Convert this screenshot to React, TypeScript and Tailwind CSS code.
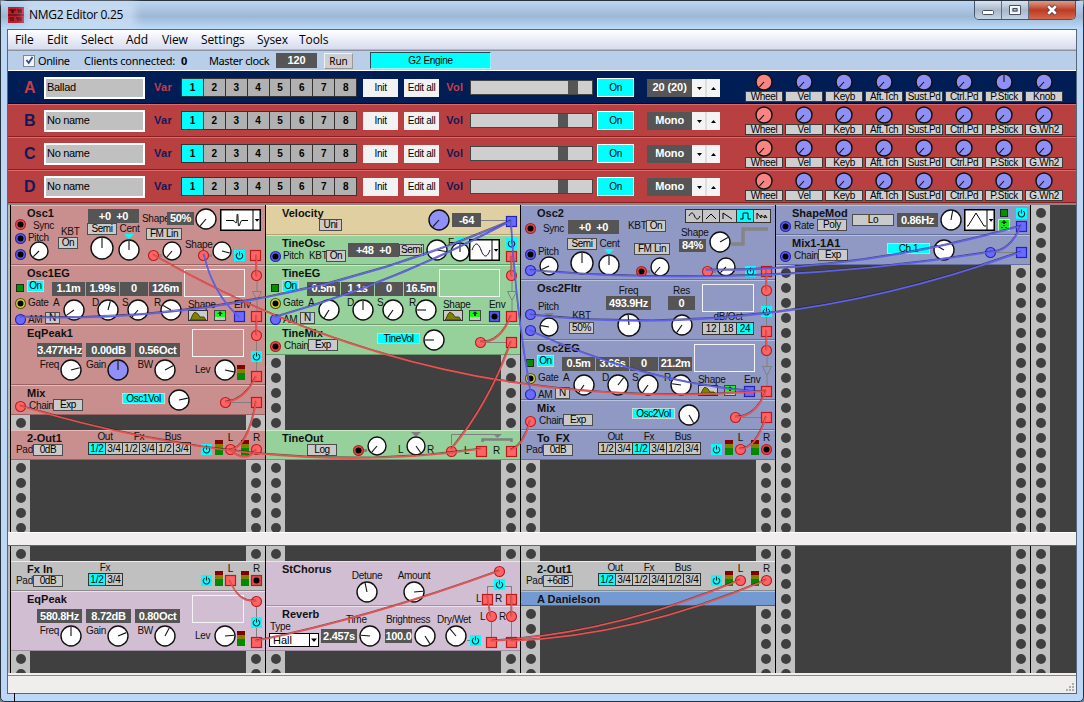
import React, { type ReactNode } from "react";

type Tint = "red" | "blue" | "yellow";
type WithClass = { className?: string; children?: ReactNode };

/* ---------- basic controls ---------- */

function T({ className = "", children }: WithClass) {
  return <span className={"block shrink-0 whitespace-pre text-[10px] leading-3 tracking-[-0.3px] text-[#111] " + className}>{children}</span>;
}

function Title({ children }: WithClass) {
  return <h3 className="h-[14px] shrink-0 whitespace-pre pl-4 text-[11px] font-bold leading-[14px] text-[#111]">{children}</h3>;
}

function Btn({ className = "", children }: WithClass) {
  return (
    <button className={"flex h-3 shrink-0 items-center justify-center whitespace-nowrap border border-[#4c4c4c] bg-[#cacaca] text-[10px] leading-none tracking-[-0.4px] text-black " + className}>
      {children}
    </button>
  );
}

function Lit({ className = "", children }: WithClass) {
  return (
    <button className={"flex shrink-0 items-center justify-center whitespace-nowrap border border-[#c8dada] bg-[#00ffff] text-[10px] leading-none tracking-[-0.4px] text-black " + className}>
      {children}
    </button>
  );
}

function Val({ className = "", children }: WithClass) {
  return (
    <div className={"flex shrink-0 items-center justify-center overflow-hidden whitespace-pre bg-[#555555] text-[11px] font-bold leading-none tracking-[-0.3px] text-white " + className}>
      {children}
    </div>
  );
}

function Knob({ r = 10, a = 0, fill = "#ffffff", className = "" }: { r?: number; a?: number; fill?: string; className?: string }) {
  const s = 2 * r + 2;
  const c = s / 2;
  const t = (a * Math.PI) / 180;
  return (
    <svg width={s} height={s} className={"block shrink-0 overflow-visible " + className}>
      <circle cx={c} cy={c} r={r} fill={fill} stroke="#101010" strokeWidth="1.4" />
      <line x1={c} y1={c} x2={c + Math.sin(t) * (r - 1)} y2={c - Math.cos(t) * (r - 1)} stroke="#111" strokeWidth="1.1" />
    </svg>
  );
}

const JACK = {
  red: { on: "#ff6363", edge: "#b81c1c", ring: "#e04a4a" },
  blue: { on: "#6a6aff", edge: "#2424b4", ring: "#5a5ae6" },
  yellow: { on: "#d8d848", edge: "#55550a", ring: "#d0d048" },
};

function Jack({ c = "red", on = false, out = false, className = "" }: { c?: Tint; on?: boolean; out?: boolean; className?: string }) {
  const k = JACK[c];
  const fill = on ? k.on : k.ring;
  return (
    <svg width="11" height="11" className={"block shrink-0 overflow-visible " + className}>
      {out ? <rect x="0.5" y="0.5" width="10" height="10" fill={fill} stroke={k.edge} strokeWidth="1.2" /> : <circle cx="5.5" cy="5.5" r="5" fill={fill} stroke={k.edge} strokeWidth="1.1" />}
      {!on && <circle cx="5.5" cy="5.5" r="3" fill="#000" />}
    </svg>
  );
}

function Power({ className = "" }: WithClass) {
  return (
    <svg width="11" height="11" className={"block shrink-0 bg-[#00ffff] " + className} fill="none" stroke="#123" strokeWidth="1.1">
      <path d="M3.7 3.1a3.2 3.2 0 1 0 3.6 0M5.5 1.6v4" />
    </svg>
  );
}

function Meter({ className = "" }: WithClass) {
  return (
    <div className={"flex h-[15px] w-2 shrink-0 flex-col " + className}>
      <div className="h-1 bg-[#800000]" />
      <div className="h-1 bg-[#808000]" />
      <div className="flex-1 bg-[#008a00]" />
    </div>
  );
}

function Led({ className = "" }: WithClass) {
  return <div className={"h-2 w-2 shrink-0 border border-[#163016] bg-[#009000] " + className} />;
}

function Graph({ className = "" }: WithClass) {
  return <div className={"h-7 shrink-0 border border-[#f4f4f4] " + className} />;
}

function Stub() {
  return <div className="mb-1 h-[3px] w-[3px] shrink-0 bg-[#858585]" />;
}

function Wire({ className = "" }: WithClass) {
  return <div className={"bg-[#808080] " + className} />;
}

function Triangle({ fill = "#808080", className = "" }: { fill?: string; className?: string }) {
  return (
    <svg width="10" height="5" className={"block shrink-0 " + className}>
      <path d="M0 0h10l-5 5z" fill={fill} />
    </svg>
  );
}

function Segs({ labels, on }: { labels: string[]; on: number }) {
  return (
    <div className="flex border-l border-[#333]">
      {labels.map((l, i) => (
        <div
          key={i}
          className={"flex h-[13px] w-[17px] items-center justify-center border-y border-r border-[#333] text-[10px] leading-none tracking-[-0.2px] text-black " + (i === on ? "bg-[#00ffff]" : "bg-[#c6c6c6]")}
        >
          {l}
        </div>
      ))}
    </div>
  );
}

function WaveBox({ w, split, d, className = "" }: { w: number; split: number; d: string; className?: string }) {
  return (
    <svg width={w} height="22" className={"block shrink-0 " + className} fill="none" stroke="#000">
      <rect x="0.75" y="0.75" width={w - 1.5} height="20.5" fill="#fff" strokeWidth="1.5" />
      <line x1={split} x2={split} y1="0" y2="22" />
      <path d={d} />
      <path d={`M${split + 1.8} 10h4.6l-2.3 2.8z`} fill="#000" stroke="none" />
    </svg>
  );
}

/* ---------- rack ---------- */

const TONES = {
  red: "bg-[#c98e8e] border-t-[#e8baba] border-b-[#9a6464]",
  sand: "bg-[#dfcfa1] border-t-[#f4ead0] border-b-[#b3a272]",
  green: "bg-[#96d19b] border-t-[#c4edc6] border-b-[#699c6d]",
  blue: "bg-[#8f99c3] border-t-[#b9c1e2] border-b-[#66709c]",
  gray: "bg-[#c0c0c0] border-t-[#ececec] border-b-[#8a8a8a]",
  mauve: "bg-[#d2bed3] border-t-[#efe0f0] border-b-[#a38fa5]",
  azure: "bg-[#739bd2] border-t-[#a5c4ea] border-b-[#3c6296]",
};
type Tone = keyof typeof TONES;

const HEIGHTS = { 1: "h-[15px]", 2: "h-[30px]", 3: "h-[45px]", 4: "h-[60px]", 5: "h-[75px]" };

function Module({ units, tone, children }: { units: keyof typeof HEIGHTS; tone: Tone; children: ReactNode }) {
  return <section className={"flex w-[254px] shrink-0 border-y " + HEIGHTS[units] + " " + TONES[tone]}>{children}</section>;
}

function Blank({ rows }: { rows: number }) {
  const rail = (
    <div className="w-[19px] bg-[#c1c1c1]">
      {Array.from({ length: rows }, (_, i) => (
        <div key={i} className="flex h-[15px] items-center justify-center">
          <div className="h-[10px] w-[10px] rounded-full bg-[#3f3f3f]" />
        </div>
      ))}
    </div>
  );
  return (
    <div className="flex w-[254px] shrink-0 justify-between bg-[#404040]">
      {rail}
      {rail}
    </div>
  );
}

function Column({ children }: { children?: ReactNode }) {
  return <div className="flex w-[255px] shrink-0 flex-col overflow-hidden border-l border-black">{children}</div>;
}

/* Signal path on the right edge: input, bypass, output. */
function ThroughStrip() {
  return (
    <div className="ml-auto flex w-[17px] flex-col items-center pb-[2px] pt-1">
      <Jack on />
      <Wire className="w-px flex-1" />
      <Power />
      <Wire className="w-px flex-1" />
      <Jack on out />
    </div>
  );
}

/* ---------- shared module types ---------- */

function EnvModule({ tone, name, values, angles, envOn }: { tone: Tone; name: string; values: string[]; angles: number[]; envOn: boolean }) {
  const valueW = ["w-[33px]", "w-[33px]", "w-[28px]", "w-[33px]"];
  const cellW = ["w-[32px] -ml-[7px]", "w-[34px] pl-[7px]", "w-[30px] pl-[3px]", "w-[33px] pl-[5px]"];
  return (
    <Module units={4} tone={tone}>
      <div className="flex w-[237px] flex-col">
        <div className="flex h-[31px]">
          <div className="w-[173px]">
            <Title>{name}</Title>
            <div className="flex h-4 items-center pl-[5px]">
              <Led className="mb-px" />
              <Lit className="mb-1 ml-[3px] h-3 w-[17px]">On</Lit>
              <div className="ml-2 mt-px flex gap-px">
                {values.map((v, i) => (
                  <Val key={i} className={"h-[14px] " + valueW[i]}>
                    {v}
                  </Val>
                ))}
              </div>
            </div>
          </div>
          <Graph className="mt-[3px] w-[61px]" />
        </div>
        <div className="flex flex-1">
          <div className="flex w-[49px] flex-col gap-[3px]">
            <div className="flex items-center pl-1">
              <Jack c="yellow" />
              <T className="ml-[2px]">Gate</T>
            </div>
            <div className="flex items-center pl-1">
              <Jack c="blue" on />
              <T className="ml-[2px] w-[17px]">AM</T>
              <Btn className="mb-[3px] w-[15px]">N</Btn>
            </div>
          </div>
          {["A", "D", "S", "R"].map((l, i) => (
            <div key={l} className={"flex justify-between " + cellW[i]}>
              <T className="w-0">{l}</T>
              <Knob a={angles[i]} className="mt-[2px]" />
            </div>
          ))}
          <div className="ml-[6px] w-[46px] pt-[2px]">
            <T className="leading-[11px]">Shape</T>
            <div className="flex gap-[6px]">
              <svg width="20" height="11" className="block shrink-0 border border-[#333] bg-[#cacaca]">
                <path d="M1 9C3 7 3 3 6 1l3 2 2 3h4l2 3z" fill="#808000" stroke="#2e2e00" strokeWidth="0.8" />
              </svg>
              <svg width="12" height="11" className="block shrink-0 border border-[#444] bg-[#c8c8c8]">
                <path d="M0 0h10v6H0z" fill="#10ff10" />
                <path d="M5 0.3L7.8 3H6v2H4V3H2.2z" fill="#053605" />
              </svg>
            </div>
          </div>
          <div className="w-[14px] pt-[2px]">
            <T>Env</T>
            <Jack c="blue" out on={envOn} />
          </div>
        </div>
      </div>
      <div className="flex w-[17px] flex-col items-center pb-[2px] pt-1">
        <Jack on />
        <svg width="10" height="30" className="block" fill="none" stroke="#808080">
          <path d="M5 0v10M5 20v10M0.5 10.5h9L5 19.500z" />
        </svg>
        <Jack on out />
      </div>
    </Module>
  );
}

function EqModule({ tone, name, values, angles, gainFill }: { tone: Tone; name: string; values: string[]; angles: number[]; gainFill?: string }) {
  return (
    <Module units={4} tone={tone}>
      <div className="w-[181px]">
        <Title>{name}</Title>
        <div className="mt-[3px] flex gap-1 pl-[26px]">
          {values.map((v) => (
            <Val key={v} className="h-[14px] w-[45px]">
              {v}
            </Val>
          ))}
        </div>
        <div className="mt-[2px] flex pl-6">
          {["Freq", "Gain", "BW"].map((l, i) => (
            <div key={l} className="flex w-[47px] justify-end">
              <T className="mr-px">{l}</T>
              <Knob a={angles[i]} fill={i === 1 ? gainFill : undefined} />
            </div>
          ))}
        </div>
      </div>
      <div className="w-[54px] pt-[3px]">
        <Graph className="w-[52px]" />
        <div className="mt-[2px] flex items-center pl-[3px]">
          <T className="w-[19px]">Lev</T>
          <Knob a={angles[3]} />
          <Meter className="ml-px mt-[5px]" />
        </div>
      </div>
      <ThroughStrip />
    </Module>
  );
}

function MixModule({ tone, name, channel, a, c = "red", chainOn = false }: { tone: Tone; name: string; channel: string; a: number; c?: Tint; chainOn?: boolean }) {
  return (
    <Module units={2} tone={tone}>
      <div className="w-[111px]">
        <Title>{name}</Title>
        <div className="flex items-center pl-1">
          <Jack c={c} on={chainOn} />
          <T className="ml-[3px] w-6">Chain</T>
          <Btn className="-mt-[2px] w-[30px]">Exp</Btn>
        </div>
      </div>
      <Lit className="mt-[7px] h-[11px] w-[43px]">{channel}</Lit>
      <Knob a={a} className="ml-[3px] mt-[3px]" />
      <div className="ml-auto mr-[3px] flex items-center pt-[5px]">
        <Jack c={c} on />
        <Wire className="h-px w-5" />
        <Jack c={c} on out />
      </div>
    </Module>
  );
}

function OutModule({ tone, name, pad, on, groups = ["Out", "Fx", "Bus"], out = false, rOn }: { tone: Tone; name: string; pad: string; on: number; groups?: string[]; out?: boolean; rOn: boolean }) {
  return (
    <Module units={2} tone={tone}>
      <div className="w-[77px]">
        <Title>{name}</Title>
        <div className="-mt-px flex items-center pl-[5px]">
          <T className="w-[17px]">Pad</T>
          <Btn className="w-[30px]">{pad}</Btn>
        </div>
      </div>
      <div>
        <div className="flex">
          {groups.map((g) => (
            <T key={g} className="h-[11px] w-[34px] text-center">
              {g}
            </T>
          ))}
        </div>
        <Segs labels={groups.flatMap(() => ["1/2", "3/4"])} on={on} />
      </div>
      <div className="ml-auto mr-[3px] flex items-end pb-1">
        <Power />
        <Meter className="ml-[3px]" />
        <div className="flex w-[15px] flex-col items-center">
          <T>L</T>
          <Jack on out={out} />
        </div>
        <Meter className="ml-[3px] mr-[2px]" />
        <div className="flex w-[11px] flex-col items-center">
          <T>R</T>
          <Jack on={rOn} out={out} />
        </div>
      </div>
    </Module>
  );
}

/* Semitone and cent tuning, shared by both oscillators. */
function Tuning({ className = "" }: WithClass) {
  return (
    <div className={"flex w-[53px] flex-col items-center " + className}>
      <Val className="h-[14px] w-[51px]">{"+0  +0"}</Val>
      <div className="mt-auto flex">
        <div className="flex w-[30px] flex-col items-center">
          <Btn className="w-[30px]">Semi</Btn>
          <Knob r={11} className="mt-px" />
        </div>
        <div className="flex w-[23px] flex-col items-center">
          <T className="ml-[2px] leading-[11px]">Cent</T>
          <Triangle fill="#00ffff" />
          <Knob />
        </div>
      </div>
    </div>
  );
}

/* ---------- individual modules ---------- */

function Osc1() {
  return (
    <Module units={4} tone="red">
      <div className="w-[47px]">
        <Title>Osc1</Title>
        <div className="flex pl-1">
          <div className="-mt-px flex flex-col">
            <Jack />
            <Jack c="blue" className="mt-[3px]" />
            <Jack c="blue" className="mt-[5px]" />
          </div>
          <div className="ml-[2px]">
            <T className="ml-[5px]">Sync</T>
            <T>Pitch</T>
            <Knob r={9} a={225} className="-mt-[3px] ml-px" />
          </div>
        </div>
      </div>
      <div className="w-[29px] pt-5">
        <T className="ml-[3px] leading-[11px]">KBT</T>
        <Btn className="w-5">On</Btn>
      </div>
      <Tuning className="mb-[3px] mt-[3px]" />
      <div className="flex w-[125px] flex-col">
        <div className="flex h-[34px]">
          <div className="ml-[2px] w-[53px]">
            <div className="flex items-center pt-[6px]">
              <T className="w-[25px]">Shape</T>
              <Val className="h-[13px] w-[27px]">50%</Val>
            </div>
            <Btn className="ml-1 mt-[3px] w-9">FM Lin</Btn>
          </div>
          <Knob a={220} className="mt-[2px]" />
          <WaveBox w={41} split={33} className="ml-[3px] mt-[3px]" d="M6 11.500h7c2 0 2 2.500 3 2.500 1.500 0 .5-9 1.500-9s0 12 1.500 12c1 0 1-5.500 3-5.500h6" />
        </div>
        <div className="flex items-end pl-2">
          <Jack on />
          <Stub />
          <Knob r={9} a={220} />
          <div className="ml-[3px] w-[27px]">
            <T className="leading-[10px]">Shape</T>
            <div className="flex items-end justify-end">
              <Jack on />
              <Stub />
            </div>
          </div>
          <Knob r={9} a={105} />
          <Power className="ml-[2px]" />
          <Jack on out className="ml-[5px]" />
        </div>
      </div>
    </Module>
  );
}

function Velocity() {
  return (
    <Module units={2} tone="sand">
      <div className="w-[162px]">
        <Title>Velocity</Title>
        <Btn className="ml-[53px] -mt-px w-[23px]">Uni</Btn>
      </div>
      <Knob fill="#8f90f8" a={222} className="mt-[3px]" />
      <div className="ml-[2px] mr-[3px] flex flex-1 items-center">
        <Val className="h-[14px] w-[29px]">-64</Val>
        <Wire className="h-px flex-1" />
        <Jack c="blue" on out className="mt-[3px]" />
      </div>
    </Module>
  );
}

function TineOsc() {
  return (
    <Module units={2} tone="green">
      <div className="w-[82px]">
        <Title>TineOsc</Title>
        <div className="flex items-center pl-1">
          <Jack c="blue" />
          <T className="ml-[2px] w-[26px]">Pitch</T>
          <T className="w-[17px]">KBT</T>
          <Btn className="-mt-px w-5">On</Btn>
        </div>
      </div>
      <Val className="mt-[7px] h-[14px] w-[51px]">{"+48  +0"}</Val>
      <Btn className="mt-2 w-[25px]">Semi</Btn>
      <Knob a={100} className="ml-[2px] mt-[3px]" />
      <T className="w-[2px] pt-px">F</T>
      <div className="flex w-5 flex-col items-center">
        <Triangle fill="#00ffff" className="mt-px" />
        <Knob r={9} />
      </div>
      <WaveBox w={31} split={23} className="-ml-px mt-[3px]" d="M3 11C6 3 9 3 12 11s6 8 9 0" />
      <div className="ml-auto flex w-[17px] flex-col items-center gap-[2px] pt-[2px]">
        <Power />
        <Jack on out />
      </div>
    </Module>
  );
}

function TineOut() {
  return (
    <Module units={2} tone="green">
      <div className="w-[87px]">
        <Title>TineOut</Title>
        <Btn className="ml-[41px] -mt-px w-[30px]">Log</Btn>
      </div>
      <div className="flex items-end pb-[3px]">
        <Jack />
        <Stub />
        <Knob r={9} a={220} />
        <T className="ml-[11px] w-[8px]">L</T>
        <div className="flex flex-col items-center">
          <Triangle />
          <Knob r={9} a={145} className="-mt-px" />
        </div>
        <T className="ml-px">R</T>
      </div>
      <div className="ml-auto mr-[3px] pt-[3px]">
        <svg width="67" height="11" className="block" fill="none" stroke="#808080">
          <path d="M5.500 11V0.500h46" />
          <path d="M36.500 8V5.500h29V8" strokeWidth="2.500" />
          <path d="M47 0h9l-4.500 4z" fill="#808080" stroke="none" />
        </svg>
        <div className="flex items-center">
          <Jack on />
          <T className="ml-[7px] w-3">L</T>
          <Jack on out />
          <T className="ml-[6px] w-[13px]">R</T>
          <Jack on out />
        </div>
      </div>
    </Module>
  );
}

const WAVES = ["M3 6c2-4 4-4 5.500 0s4 4 5.500 0", "M3 9l5-5 5 5", "M3 9V3l9 6", "M3 9h3V3h5v6h3", "M3 9V3l4 5V5l4 3V5l2 3"];

function Osc2() {
  return (
    <Module units={5} tone="blue">
      <div className="w-[46px]">
        <Title>Osc2</Title>
        <div className="flex pl-1">
          <div className="flex flex-col pt-[3px]">
            <Jack />
            <Jack c="blue" className="mt-[15px]" />
            <Jack c="blue" on className="mt-[5px]" />
          </div>
          <div className="ml-[2px] pt-[3px]">
            <T className="ml-[5px]">Sync</T>
            <T className="mt-[11px]">Pitch</T>
            <Knob r={9} a={245} className="-mt-[2px] ml-px" />
          </div>
        </div>
      </div>
      <Tuning className="mb-[3px] mt-[14px]" />
      <div className="ml-2 w-[51px] pt-[14px]">
        <div className="flex items-center">
          <T className="w-[18px]">KBT</T>
          <Btn className="w-5">On</Btn>
        </div>
        <Btn className="ml-[6px] mt-[11px] w-9">FM Lin</Btn>
        <div className="mt-[2px] flex items-end pl-2">
          <Jack />
          <Stub />
          <Knob r={9} a={220} />
        </div>
      </div>
      <div className="flex flex-1 flex-col">
        <div className="ml-[6px] mt-[3px] flex border-l border-[#333]">
          {WAVES.map((d, i) => (
            <div key={i} className={"h-[14px] w-[17px] border-y border-r border-[#333] " + (i === 3 ? "bg-[#00ffff]" : "bg-[#c6c6c6]")}>
              <svg width="16" height="12" className="block" fill="none" stroke="#000">
                <path d={d} />
              </svg>
            </div>
          ))}
        </div>
        <div className="flex h-[34px]">
          <div className="w-[27px] pt-1">
            <T className="ml-[2px]">Shape</T>
            <Val className="h-[13px] w-[27px]">84%</Val>
          </div>
          <Knob a={60} className="ml-[3px] mt-2" />
          <svg width="38" height="22" className="mt-1 block" fill="none" stroke="#858585" strokeWidth="3.500">
            <path d="M0 17h12V2h25" />
          </svg>
        </div>
        <div className="mr-[3px] flex items-end justify-end">
          <Jack on />
          <Stub />
          <Knob r={9} a={225} />
          <Power className="ml-[9px]" />
          <Jack on out className="ml-[5px]" />
        </div>
      </div>
    </Module>
  );
}

function Osc2Fltr() {
  return (
    <Module units={4} tone="blue">
      <div className="w-12">
        <Title>Osc2Fltr</Title>
        <div className="flex pl-1">
          <div className="flex flex-col gap-[5px] pt-[14px]">
            <Jack c="blue" on />
            <Jack c="blue" on />
          </div>
          <div className="ml-[2px] pt-[6px]">
            <T>Pitch</T>
            <Triangle className="ml-[6px]" />
            <Knob r={9} a={280} className="-mt-px ml-px" />
          </div>
        </div>
      </div>
      <div className="flex w-[25px] flex-col items-center pt-[29px]">
        <T>KBT</T>
        <Btn className="w-[25px]">50%</Btn>
      </div>
      <div className="ml-3 flex w-[45px] flex-col items-center pt-1">
        <T className="leading-[11px]">Freq</T>
        <Val className="h-[14px] w-[45px]">493.9Hz</Val>
        <Knob r={11} a={355} className="mt-[3px]" />
      </div>
      <div className="ml-[17px] flex w-[27px] flex-col items-center pt-1">
        <T className="leading-[11px]">Res</T>
        <Val className="h-[14px] w-[27px]">0</Val>
        <Knob a={215} className="mt-1" />
      </div>
      <div className="ml-[7px] pt-[3px]">
        <Graph className="w-[52px]" />
        <T className="text-center leading-[10px]">dB/Oct</T>
        <Segs labels={["12", "18", "24"]} on={2} />
      </div>
      <ThroughStrip />
    </Module>
  );
}

function ShapeMod() {
  return (
    <Module units={2} tone="blue">
      <div className="w-[76px]">
        <Title>ShapeMod</Title>
        <div className="flex items-center pl-1">
          <Jack c="blue" />
          <T className="ml-[3px] w-[23px]">Rate</T>
          <Btn className="-mt-[2px] w-[30px]">Poly</Btn>
        </div>
      </div>
      <Btn className="mt-2 w-[42px]">Lo</Btn>
      <Val className="ml-[3px] mt-[7px] h-[14px] w-[41px]">0.86Hz</Val>
      <Knob a={10} className="ml-[2px] mt-[3px]" />
      <WaveBox w={31} split={23} className="ml-[2px] mt-[3px]" d="M3 17h1l8-13 8 13h2" />
      <div className="ml-[3px] flex flex-col items-center gap-[2px] pt-[3px]">
        <Led />
        <svg width="12" height="12" className="block border border-[#bdf0bd] bg-[#10ef10]">
          <path d="M5 0l3 3H6v1H4V3H2zM4 5h2v1H4zM2 7h2v1H2zM6 7h2v1H6z" fill="#043a04" />
        </svg>
      </div>
      <div className="ml-auto mr-[3px] flex flex-col items-center gap-[2px] pt-[2px]">
        <Power />
        <Jack c="blue" on out />
      </div>
    </Module>
  );
}

function StChorus() {
  return (
    <Module units={3} tone="mauve">
      <div className="w-[86px]">
        <Title>StChorus</Title>
      </div>
      <div className="flex gap-[15px] pt-2">
        <div className="flex w-[30px] flex-col items-center">
          <T className="leading-[11px]">Detune</T>
          <Knob a={348} />
        </div>
        <div className="flex w-[34px] flex-col items-center">
          <T className="leading-[11px]">Amount</T>
          <Knob a={85} />
        </div>
      </div>
      <div className="ml-auto mr-[3px] flex flex-col items-end pt-1">
        <Jack on className="mr-[12px]" />
        <div className="mr-[5px] mt-[2px] flex items-end">
          <div className="h-2 w-[7px] border-l border-t border-[#808080]" />
          <Power className="mb-1" />
          <div className="h-2 w-[7px] border-r border-t border-[#808080]" />
        </div>
        <div className="-mt-px flex items-center">
          <T className="w-[6px]">L</T>
          <Jack on out />
          <T className="ml-[2px] w-[11px]">R</T>
          <Jack on out />
        </div>
      </div>
    </Module>
  );
}

function Reverb() {
  return (
    <Module units={3} tone="mauve">
      <div className="w-[55px]">
        <Title>Reverb</Title>
        <T className="ml-1 leading-[12px]">Type</T>
        <div className="ml-[3px] flex h-[14px] w-[50px] items-center justify-between border border-black bg-white pl-[3px] text-[11px] leading-none text-black">
          Hall
          <svg width="9" height="12" className="block border-l border-black">
            <path d="M1 4.500h6l-3 3.500z" />
          </svg>
        </div>
      </div>
      <div className="w-16 pt-[7px]">
        <T className="ml-[25px] leading-[11px]">Time</T>
        <div className="flex items-center gap-[2px]">
          <Val className="h-[14px] w-9">2.457s</Val>
          <Knob a={275} />
        </div>
      </div>
      <div className="w-[52px] pt-[7px]">
        <T className="ml-px leading-[11px]">Brightness</T>
        <div className="flex items-center gap-[2px]">
          <Val className="h-[14px] w-[27px]">100.0</Val>
          <Knob a={148} />
        </div>
      </div>
      <div className="pt-[7px]">
        <T className="leading-[11px]">Dry/Wet</T>
        <div className="ml-2 flex items-center">
          <Knob a={320} />
          <Wire className="mt-2 h-px w-[3px]" />
          <Power className="mt-2" />
        </div>
      </div>
      <div className="ml-auto mr-[3px] flex gap-[2px] pt-1">
        <T className="-ml-[10px] w-1">L</T>
        <div className="flex w-[11px] flex-col items-center">
          <Jack on />
          <Wire className="h-[15px] w-px" />
          <Jack on out />
        </div>
        <T className="-mr-[2px] w-[7px] text-right">R</T>
        <div className="flex w-[11px] flex-col items-center">
          <Jack on />
          <Wire className="h-[15px] w-px" />
          <Jack on out />
        </div>
      </div>
    </Module>
  );
}

/* ---------- patch cables ---------- */

const RED = [
  "M153.500 255Q434 417 766 391", "M20.500 406Q269 480 481 449", "M511 342Q489 403 451.500 449", "M511 316Q500 343 481 342",
  "M256 377Q244 401 226 402", "M256 402Q248 448 230 450", "M230 450Q246 464 256 450", "M511 450Q524 445 530 421",
  "M766 391Q756 417 736 417", "M766 417Q756 449 740 449", "M256.500 256V276", "M256.500 316V335", "M511.500 257V276",
  "M766.500 271V290", "M766.500 331V350", "M230 581Q239 603 256 601", "M256 641Q370 618 499 571", "M487.500 597L490.500 616",
  "M511.500 597V616", "M491.500 641Q616 633 740 580", "M511.500 641Q639 635 766 580",
];
const BLUE = [
  "M20.500 317Q266 326 511 221", "M275.500 317Q395 283 511 221", "M204 255Q213 294 239 317", "M511 221Q516 310 530.500 391",
  "M530.500 270.500Q761 289 991 252", "M706.500 270Q864 271 1021 226", "M530.500 315Q776 341 1021 252", "M530.500 331Q640 381 749 391",
  "M1021 226Q1010 252 991 252",
];

function Cables({ paths, color, edge }: { paths: string[]; color: string; edge: string }) {
  return (
    <g fill="none" strokeLinecap="round">
      {paths.map((d) => (
        <g key={d}>
          <path d={d} stroke={edge} strokeWidth="1" strokeOpacity="0.6" transform="translate(-0.5 -0.8)" />
          <path d={d} stroke={color} strokeWidth="1.7" />
        </g>
      ))}
    </g>
  );
}

/* ---------- performance slots ---------- */

const SLOTS = [
  { id: "A", patch: "Ballad", voices: "20 (20)", thumb: 97, last: "Knob", active: true },
  { id: "B", patch: "No name", voices: "Mono", thumb: 87, last: "G.Wh2", active: false },
  { id: "C", patch: "No name", voices: "Mono", thumb: 87, last: "G.Wh2", active: false },
  { id: "D", patch: "No name", voices: "Mono", thumb: 87, last: "G.Wh2", active: false },
];
const MORPHS = ["Wheel", "Vel", "Keyb", "Aft.Tch", "Sust.Pd", "Ctrl.Pd", "P.Stick"];

function Slot({ slot }: { slot: (typeof SLOTS)[number] }) {
  const ink = slot.active ? "text-[#c63d48]" : "text-[#101a58]";
  const small = "flex items-center justify-center text-[10px] leading-none tracking-[-0.3px] text-black";
  return (
    <div className={"flex h-[33px] items-center border-y " + (slot.active ? "border-b-[#000b30] border-t-[#001e55] bg-[#001e55]" : "border-b-[#8b1f1f] border-t-[#dd6a6a] bg-[#b94041]")}>
      <div className={"ml-4 w-5 text-[16px] font-bold leading-none " + ink}>{slot.id}</div>
      <div className="h-[22px] w-[101px] border-2 border-white bg-[#c0c0c0] pl-px text-[11px] leading-[16px] tracking-[-0.3px] text-black">{slot.patch}</div>
      <div className={"ml-[9px] w-[27px] text-[11px] font-bold tracking-[0.3px] " + ink}>Var</div>
      <div className="flex h-[19px] border-l border-[#333]">
        {[1, 2, 3, 4, 5, 6, 7, 8].map((n) => (
          <div key={n} className={"flex w-[21.9px] items-center justify-center border-y border-r border-[#333] text-[10px] font-bold text-black " + (n === 1 ? "bg-[#00ffff]" : "bg-[#b1b1b1]")}>
            {n}
          </div>
        ))}
      </div>
      <div className={"ml-[6px] h-[18px] w-[35px] bg-[#f2f2f2] " + small}>Init</div>
      <div className={"ml-[6px] h-[18px] w-[35px] bg-[#f2f2f2] " + small}>Edit all</div>
      <div className={"ml-[7px] w-[24px] text-[11px] font-bold tracking-[0.3px] " + ink}>Vol</div>
      <div className="h-[15px] w-[123px] border border-[#444] bg-[#cfcfcf]">
        <div className="h-full w-[10px] bg-[#555]" style={{ marginLeft: slot.thumb }} />
      </div>
      <div className={"ml-1 h-[19px] w-[37px] border border-white bg-[#00ffff] " + small}>On</div>
      <div className="ml-[13px] flex h-[18px] w-[45px] items-center justify-center bg-[#555] text-[11px] font-bold tracking-[-0.1px] text-white">{slot.voices}</div>
      <svg width="28" height="18" className="block bg-[#f4f4f4]">
        <path d="M5 8h5l-2.500 3zM19 11h5l-2.500-3z" />
        <path d="M14 0v18" stroke="#c8c8c8" />
      </svg>
      <div className="ml-[25px] flex h-full gap-[2px] pt-px">
        {[...MORPHS, slot.last].map((m, i) => (
          <div key={m} className="flex w-[38px] flex-col items-center">
            <Knob r={8} a={slot.active && i === 6 ? 0 : 222} fill={i === 0 ? "#f98484" : "#8e90f6"} />
            <div className="flex h-[11px] w-full items-center justify-center border border-[#3a3a3a] bg-[#cfcfcf] text-[10px] leading-none tracking-[-0.3px] text-black">{m}</div>
          </div>
        ))}
      </div>
    </div>
  );
}

const MENU = [
  { label: "File", w: "w-8" }, { label: "Edit", w: "w-[34px]" }, { label: "Select", w: "w-[45px]" }, { label: "Add", w: "w-9" },
  { label: "View", w: "w-[39px]" }, { label: "Settings", w: "w-14" }, { label: "Sysex", w: "w-[42px]" }, { label: "Tools", w: "w-10" },
];

function TitleBar() {
  return (
    <header className="flex h-7 shrink-0 items-start bg-linear-to-b from-[#bcd6f3] via-[#9db7d4] via-55% to-[#bcdcfb] pl-[7px]">
      <svg width="16" height="16" className="mt-[6px] block">
        <rect width="16" height="16" fill="#b8202c" />
        <path d="M1 3h3v3M5 6V3h3M9 3h2v3M13 2v4M0 8h16M1 11h5M8 11h6M2 13h4M9 13h5" fill="none" stroke="#3a0710" strokeWidth="1.200" />
      </svg>
      <div className="ml-[5px] mt-[6px] bg-[#d5e6f8]/60 pr-2 font-['Open_Sans','Noto_Sans',sans-serif] text-[12px] leading-[16px] tracking-[-0.3px] text-black shadow-[0_0_8px_5px_rgba(213,230,248,0.6)]">
        NMG2 Editor 0.25
      </div>
      <div className="ml-auto mr-[7px] flex h-[19px] overflow-hidden rounded-b-[5px] border border-t-0 border-[#45566c]">
        <div className="flex w-[27px] items-center justify-center border-r border-[#5c6e85] bg-linear-to-b from-[#d8e4f0] via-[#a9b8cb] via-50% to-[#c3d4e6] pt-1">
          <svg width="12" height="5"><rect x="0.500" y="0.500" width="11" height="4" rx="1" fill="#fff" stroke="#485060" /></svg>
        </div>
        <div className="flex w-[27px] items-center justify-center border-r border-[#5c6e85] bg-linear-to-b from-[#d8e4f0] via-[#a9b8cb] via-50% to-[#c3d4e6]">
          <svg width="12" height="10" fill="none"><rect x="1.500" y="1.500" width="9" height="7" stroke="#fff" strokeWidth="2.500" /><path d="M0.500 0.500h11v9h-11zM4 3.500h4v2.500H4z" stroke="#485060" /></svg>
        </div>
        <div className="flex w-[46px] items-center justify-center bg-linear-to-b from-[#dd9a88] via-[#bb3a22] via-50% to-[#d4664a]">
          <svg width="14" height="12" fill="none">
            <path d="M3 2l8 8M11 2l-8 8" stroke="#5a3038" strokeWidth="4.500" />
            <path d="M3.200 2.200l7.600 7.600M10.800 2.200l-7.600 7.600" stroke="#fff" strokeWidth="2.700" />
          </svg>
        </div>
      </div>
    </header>
  );
}

function Toolbar() {
  return (
    <div className="flex h-[21px] shrink-0 items-center border-b border-t border-b-white border-t-[#8a939e] bg-[#b9cee9] pl-[15px] font-['Noto_Sans','Open_Sans',sans-serif] text-[11px] leading-none tracking-[-0.1px] text-black">
      <div className="flex h-[12px] w-[12px] items-center justify-center border border-[#7b8794] bg-[#f2f5f9]">
        <svg width="9" height="9" fill="none" stroke="#2b4a9b" strokeWidth="1.800"><path d="M1.500 4l2.200 3L7.500 1" /></svg>
      </div>
      <span className="ml-[3px] w-[46px] tracking-[-0.4px]">Online</span>
      <span className="w-[97px] whitespace-nowrap tracking-[-0.2px]">Clients connected:</span>
      <b className="w-7">0</b>
      <span className="w-[67px] whitespace-nowrap tracking-[-0.4px]">Master clock</span>
      <div className="flex h-[15px] w-[41px] items-center justify-center bg-[#555] font-['Liberation_Sans'] text-[11px] font-bold text-white">120</div>
      <div className="ml-[7px] flex h-[16px] w-[29px] items-center justify-center border border-[#f2f2f2] border-b-[#999] border-r-[#999] bg-[#cfcfcf] text-[10px]">Run</div>
      <div className="ml-[17px] flex h-[17px] w-[121px] items-center justify-center border border-[#2a4a5a] border-b-[#9ff] border-r-[#9ff] bg-[#00ffff] font-['Liberation_Sans'] text-[10px] tracking-[-0.3px]">G2 Engine</div>
    </div>
  );
}

export default function App() {
  return (
    <div className="relative h-[702px] w-[1084px] overflow-hidden bg-[#767f8a] font-['Liberation_Sans',Arial,sans-serif]">
      <div className="flex h-full w-full flex-col rounded-t-[7px] rounded-b-[5px] border border-[#28323e] bg-[#bcd8f6]">
        <TitleBar />
        <main className="mx-[6px] flex h-[665px] flex-col overflow-hidden border border-[#596675] bg-[#f0eeee]">
          <nav className="flex h-5 shrink-0 items-center border-b border-[#b4b8c8] bg-linear-to-b from-white to-[#d6dcee] pl-[7px] font-['Open_Sans','Noto_Sans',sans-serif] text-[12px] leading-none tracking-[-0.1px] text-black">
            {MENU.map((m) => (
              <span key={m.label} className={"shrink-0 " + m.w}>{m.label}</span>
            ))}
          </nav>
          <Toolbar />
          <div className="h-[132px] shrink-0">
            {SLOTS.map((s) => (
              <Slot key={s.id} slot={s} />
            ))}
          </div>
          <div className="flex h-[329px] shrink-0 overflow-hidden border-t-2 border-[#8c8484] bg-[#404040]">
            <div className="w-[2px] shrink-0 bg-[#b8b8b8]" />
            <Column>
              <Osc1 />
              <EnvModule tone="red" name="Osc1EG" values={["1.1m", "1.99s", "0", "126m"]} angles={[235, 15, 220, 300]} envOn />
              <EqModule tone="red" name="EqPeak1" values={["3.477kHz", "0.00dB", "0.56Oct"]} angles={[75, 0, 62, 102]} gainFill="#8f90f8" />
              <MixModule tone="red" name="Mix" channel="Osc1Vol" a={78} chainOn />
              <Blank rows={1} />
              <OutModule tone="red" name="2-Out1" pad="0dB" on={0} rOn />
              <Blank rows={5} />
            </Column>
            <Column>
              <Velocity />
              <TineOsc />
              <EnvModule tone="green" name="TineEG" values={["0.5m", "1.1s", "0", "16.5m"]} angles={[212, 0, 215, 270]} envOn={false} />
              <MixModule tone="green" name="TineMix" channel="TineVol" a={270} />
              <Blank rows={5} />
              <TineOut />
              <Blank rows={5} />
            </Column>
            <Column>
              <Osc2 />
              <Osc2Fltr />
              <EnvModule tone="blue" name="Osc2EG" values={["0.5m", "3.66s", "0", "21.2m"]} angles={[215, 38, 215, 278]} envOn />
              <MixModule tone="blue" name="Mix" channel="Osc2Vol" a={150} chainOn />
              <OutModule tone="blue" name="To  FX" pad="0dB" on={2} rOn={false} />
              <Blank rows={5} />
            </Column>
            <Column>
              <ShapeMod />
              <MixModule tone="blue" name="Mix1-1A1" channel="Ch.1" a={300} c="blue" />
              <Blank rows={18} />
            </Column>
            <Column>
              <Blank rows={22} />
            </Column>
          </div>
          <div className="h-[13px] shrink-0 border-t border-white bg-[#f0eeee]" />
          <div className="flex h-[128px] shrink-0 overflow-hidden border-t border-[#666] bg-[#404040]">
            <div className="w-[2px] shrink-0 bg-[#b8b8b8]" />
            <Column>
              <Blank rows={1} />
              <OutModule tone="gray" name="Fx In" pad="0dB" on={0} groups={["Fx"]} out rOn={false} />
              <EqModule tone="mauve" name="EqPeak" values={["580.8Hz", "8.72dB", "0.80Oct"]} angles={[0, 68, 28, 85]} />
              <Blank rows={2} />
            </Column>
            <Column>
              <Blank rows={1} />
              <StChorus />
              <Reverb />
              <Blank rows={2} />
            </Column>
            <Column>
              <Blank rows={1} />
              <OutModule tone="gray" name="2-Out1" pad="+6dB" on={0} rOn />
              <Module units={1} tone="azure">
                <Title>A Danielson</Title>
              </Module>
              <Blank rows={5} />
            </Column>
            <Column>
              <Blank rows={9} />
            </Column>
            <Column>
              <Blank rows={9} />
            </Column>
          </div>
          <footer className="mt-[2px] flex flex-1 items-end justify-end border-t border-[#888] bg-[#f0eded]">
            <svg width="12" height="12" className="block" fill="#b0acac">
              <path d="M8 2h2v2H8zM8 5h2v2H8zM8 8h2v2H8zM5 5h2v2H5zM5 8h2v2H5zM2 8h2v2H2z" />
            </svg>
          </footer>
        </main>
      </div>
      <svg width="1084" height="702" className="pointer-events-none absolute left-0 top-0">
        <Cables paths={RED} color="#e65252" edge="#4a1010" />
        <Cables paths={BLUE} color="#6060e8" edge="#15154a" />
        <path d="M14.500 693v9" stroke="#000" />
      </svg>
    </div>
  );
}
